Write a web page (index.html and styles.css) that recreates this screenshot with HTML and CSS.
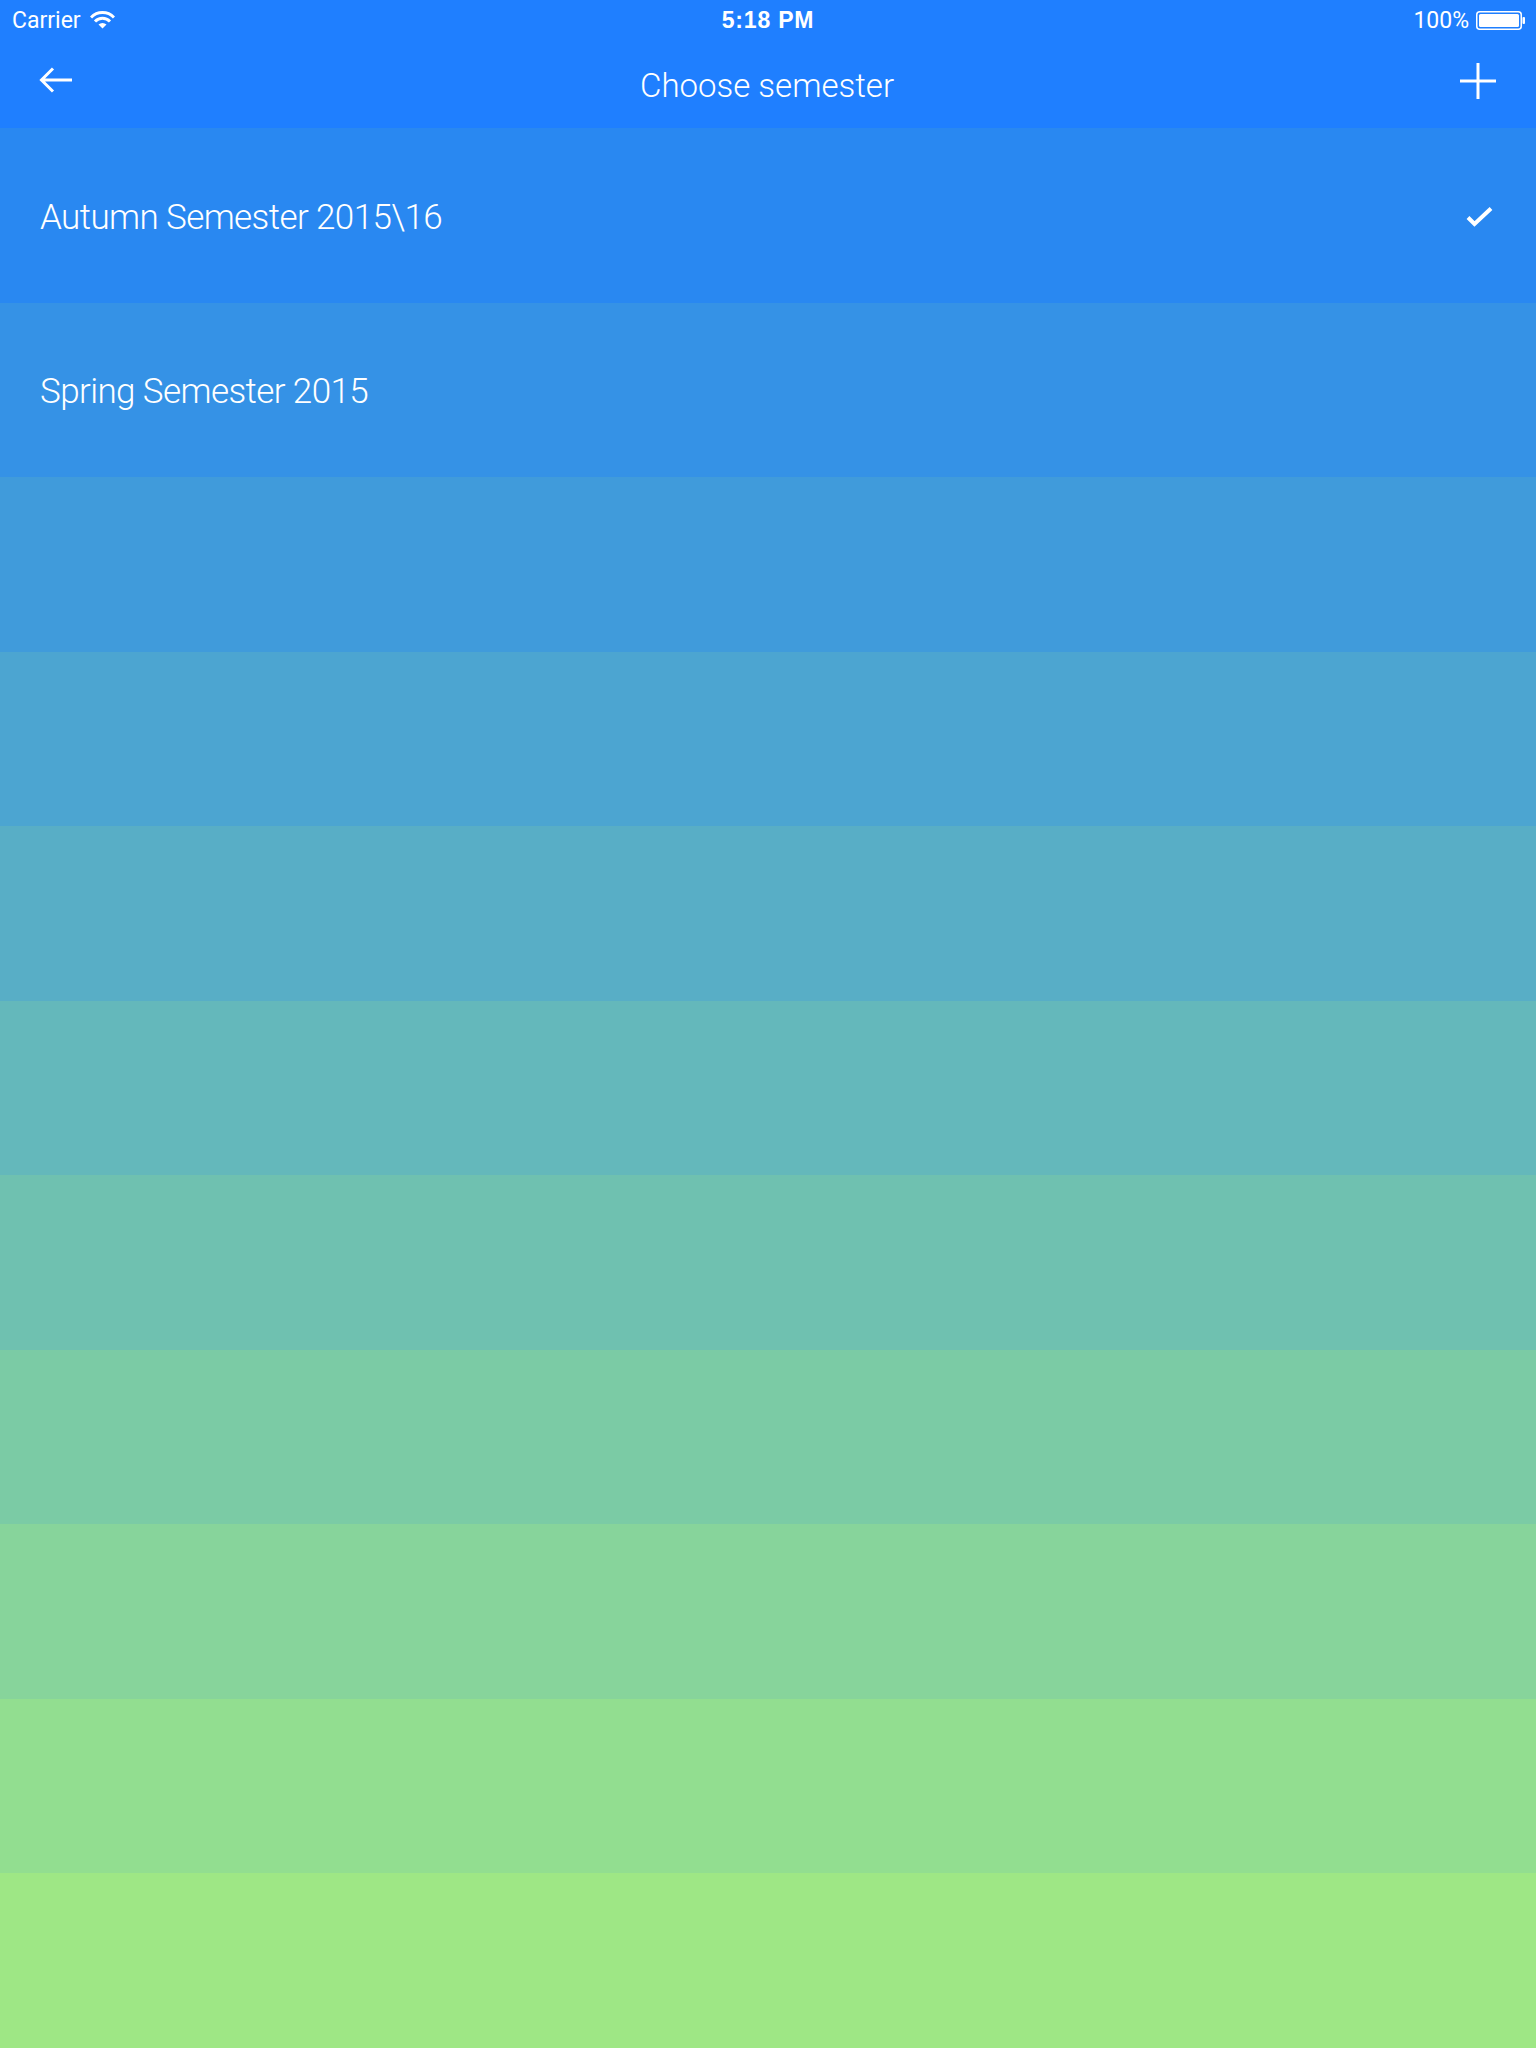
FILE: index.html
```html
<!DOCTYPE html>
<html lang="en">

<head>
    <meta charset="UTF-8">
    <meta name="viewport" content="width=device-width, initial-scale=1.0">
    <title>Choose semester</title>
    <link rel="stylesheet" href="styles.css">
</head>

<body>
    <div class="status-bar">
        <div class="status-left">
            <span>Carrier</span>
            <svg class="wifi" width="25" height="18" viewBox="0 0 25 18">
                <path d="M1 6.5 A16 16 0 0 1 24 6.5" fill="none" stroke="white" stroke-width="3" />
                <path d="M5 10.5 A10.5 10.5 0 0 1 20 10.5" fill="none" stroke="white" stroke-width="3" />
                <path d="M12.5 17.5 L8.5 13.5 A6 6 0 0 1 16.5 13.5 Z" fill="white" />
            </svg>
        </div>
        <div class="status-time">5:18 PM</div>
        <div class="status-right">
            <span>100%</span>
            <svg class="battery" width="50" height="19" viewBox="0 0 50 19">
                <rect x="0.75" y="0.75" width="44.5" height="17.5" rx="3" fill="none" stroke="white" stroke-width="1.5" />
                <rect x="3" y="3" width="40" height="13" rx="1.5" fill="white" />
                <rect x="46.5" y="6" width="2.5" height="7" rx="1" fill="white" />
            </svg>
        </div>
    </div>

    <div class="nav-bar">
        <svg class="nav-icon back" width="36" height="36" viewBox="0 0 36 36">
            <path d="M34 18 H4 M15 6.5 L3.5 18 L15 29.5" fill="none" stroke="white" stroke-width="3" />
        </svg>
        <div class="nav-title">Choose semester</div>
        <svg class="nav-icon" width="36" height="36" viewBox="0 0 36 36">
            <path d="M18 0 V36 M0 18 H36" fill="none" stroke="white" stroke-width="3" />
        </svg>
    </div>

    <div class="list">
        <div class="row row-1">
            <span>Autumn Semester 2015\16</span>
            <svg class="check" width="27" height="22" viewBox="0 0 27 22">
                <path d="M2 11.5 L8.5 18 L25 2.5" fill="none" stroke="white" stroke-width="4" />
            </svg>
        </div>
        <div class="row row-2"><span>Spring Semester 2015</span></div>
        <div class="row row-3"></div>
        <div class="row row-4"></div>
        <div class="row row-5"></div>
        <div class="row row-6"></div>
        <div class="row row-7"></div>
        <div class="row row-8"></div>
        <div class="row row-9"></div>
        <div class="row row-10"></div>
        <div class="row row-11"></div>
    </div>
</body>

</html>
```

FILE: styles.css
```css
body {
    margin: 0;
    width: 1536px;
    height: 2048px;
    display: flex;
    flex-direction: column;
    font-family: Roboto, "Liberation Sans", sans-serif;
    color: white;
    background: #9ee785;
    overflow: hidden;
}

.status-bar {
    height: 40px;
    background: #1f7fff;
    display: flex;
    justify-content: space-between;
    align-items: center;
    padding: 0 10px 0 12px;
    font-size: 23px;
    position: relative;
}

.status-left,
.status-right {
    display: flex;
    align-items: center;
    gap: 9px;
}

.status-right {
    gap: 7px;
}

.status-time {
    position: absolute;
    left: 0;
    right: 0;
    text-align: center;
    font-weight: 700;
    font-family: "Liberation Sans", sans-serif;
    letter-spacing: 0.8px;
    pointer-events: none;
}

.nav-bar {
    height: 88px;
    background: #1f7fff;
    display: flex;
    justify-content: space-between;
    align-items: center;
    padding: 0 40px 0 38px;
}

.nav-icon {
    margin-top: -6px;
}

.nav-icon.back {
    margin-top: -9px;
}

.nav-title {
    font-size: 33px;
    font-weight: 300;
    margin-top: 2px;
}

.list {
    flex: 1;
    display: flex;
    flex-direction: column;
}

.row {
    flex: 1;
    display: flex;
    justify-content: space-between;
    align-items: center;
    padding: 4px 43px 0 40px;
    font-size: 35px;
    letter-spacing: -0.6px;
    font-weight: 300;
}

.row-1 { background: #2988f1; }
.row-2 { background: #3592e6; }
.row-3 { background: #409bdb; }
.row-4 { background: #4ca5d1; }
.row-5 { background: #58aec6; }
.row-6 { background: #64b8bb; }
.row-7 { background: #6fc1b0; }
.row-8 { background: #7bcba5; }
.row-9 { background: #87d49b; }
.row-10 { background: #92de90; }
.row-11 { background: #9ee785; }
```
